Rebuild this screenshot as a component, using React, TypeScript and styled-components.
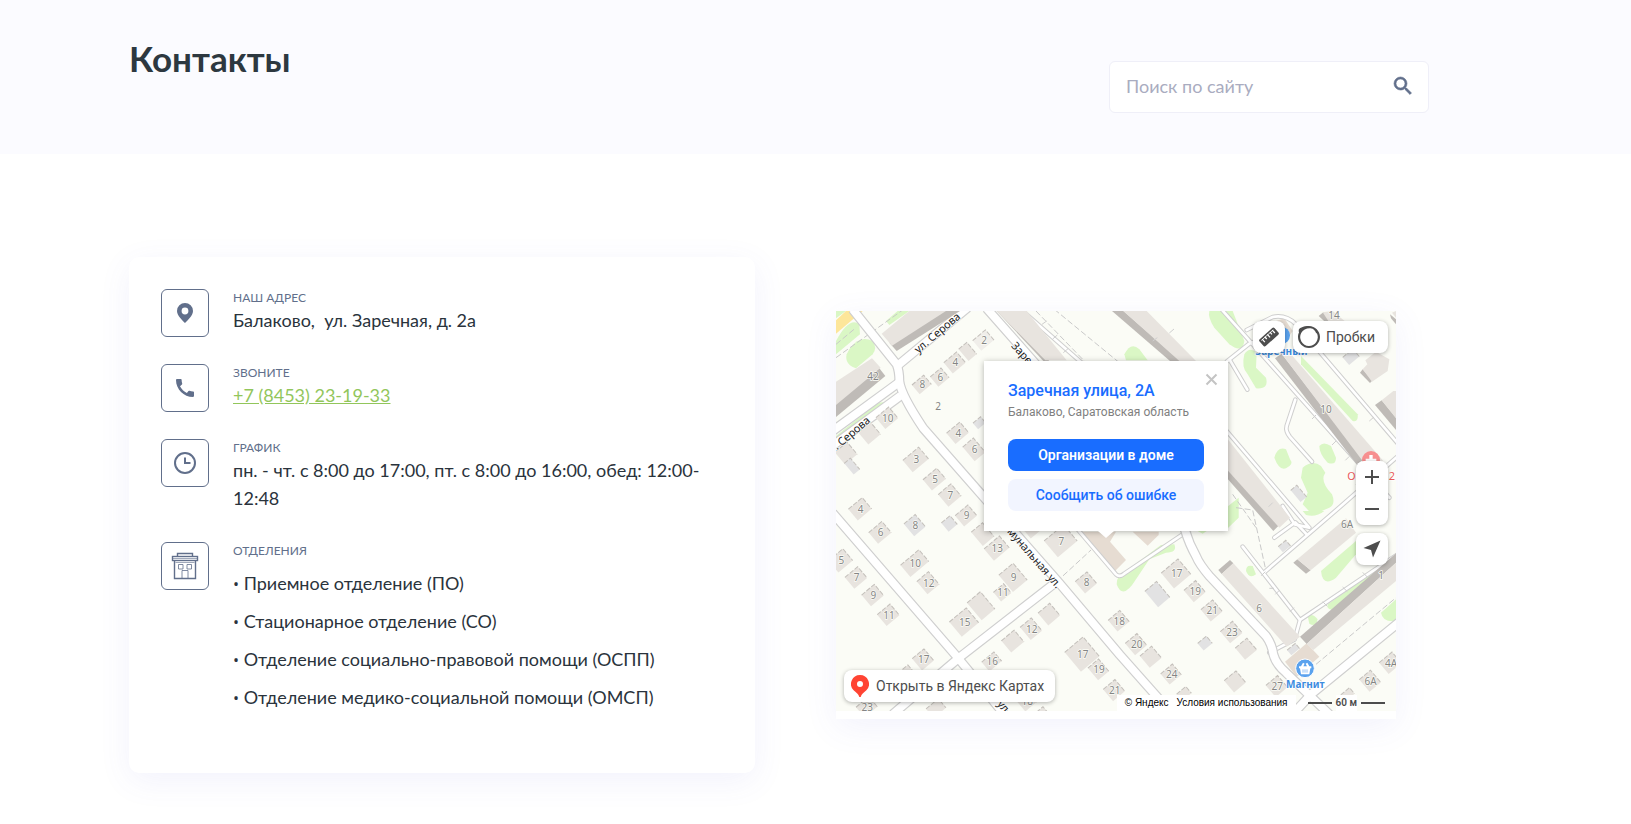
import React from "react";
import styled, { createGlobalStyle } from "styled-components";
import { MdSearch, MdCall } from "react-icons/md";

const slate = "#616f8b";
const ink = "#2a333c";

const GlobalStyle = createGlobalStyle`
  *, *::before, *::after { box-sizing: border-box; }
  body {
    margin: 0;
    background: #fff;
    color: ${ink};
    font-family: Lato, "Open Sans", sans-serif;
    font-size: 18px;
    line-height: 28px;
  }
  h1, h2, p, ul, dl, dd, dt { margin: 0; padding: 0; }
  button, input { font-family: inherit; }
`;

/* ---------- page header ---------- */

const Header = styled.header`
  background: #fbfbff;
`;

const Container = styled.div`
  padding: 0 202px 0 129px;
  @media (max-width: 1100px) {
    padding: 0 24px;
  }
`;

const HeaderRow = styled(Container)`
  display: flex;
  flex-wrap: wrap;
  justify-content: space-between;
  align-items: flex-end;
  padding-top: 36px;
  padding-bottom: 41px;
`;

const Title = styled.h1`
  align-self: flex-start;
  font-size: 35px;
  line-height: 44px;
  font-weight: 700;
  color: #2d3840;
`;

const SearchForm = styled.form`
  display: flex;
  align-items: center;
  width: 320px;
  height: 52px;
  margin-top: 25px;
  padding: 0 13px 2px 16px;
  background: #fff;
  border: 1px solid #efeff8;
  border-radius: 6px;
`;

const SearchInput = styled.input`
  flex: 1;
  min-width: 0;
  padding: 0;
  border: 0;
  outline: 0;
  background: none;
  color: ${ink};
  font-size: 18px;
  line-height: 28px;
  &::placeholder {
    color: #a9acc0;
    opacity: 1;
  }
`;

const SearchButton = styled.button`
  display: flex;
  margin: 0;
  padding: 0;
  border: 0;
  background: none;
  color: ${slate};
  font-size: 24px;
  cursor: pointer;
  path:last-child {
    stroke: currentColor;
    stroke-width: 0.6px;
  }
`;

/* ---------- contact card ---------- */

const Main = styled(Container).attrs({ as: "main" })`
  display: grid;
  grid-template-columns: minmax(0, 626fr) minmax(0, 593fr);
  column-gap: 81px;
  align-items: center;
  padding-top: 103px;
  padding-bottom: 51px;
  @media (max-width: 1100px) {
    grid-template-columns: minmax(0, 1fr);
    row-gap: 40px;
  }
`;

const Card = styled.dl`
  padding: 32px 32px 22px;
  background: #fff;
  border-radius: 10px;
  box-shadow: 0 8px 32px rgba(90, 90, 220, 0.08);
`;

const ContactRow = styled.div`
  display: flex;
  gap: 24px;
  margin-bottom: 27px;
`;

const IconBox = styled.span`
  display: flex;
  flex: none;
  align-items: center;
  justify-content: center;
  width: 48px;
  height: 48px;
  border: 1px solid ${slate};
  border-radius: 6px;
  color: ${slate};
`;

const ContactText = styled.div`
  flex: 1;
  min-width: 0;
  padding-bottom: 3px;
`;

const Label = styled.dt`
  font-size: 12px;
  line-height: 17px;
  color: ${slate};
  text-transform: uppercase;
`;

const Value = styled.dd`
  white-space: pre-wrap;
`;

const PhoneLink = styled.a`
  color: #92c65b;
  text-decoration: underline;
`;

const Departments = styled.ul`
  list-style: none;
  padding-top: 10px;
`;

const Department = styled.li`
  margin-bottom: 10px;
`;

const Bullet = styled.span`
  font-family: "Open Sans", sans-serif;
  font-size: 16px;
  line-height: 16px;
`;

/* ---------- map ---------- */

const MapCard = styled.section`
  margin-right: 33px;
  padding-bottom: 8px;
  background: #fff;
  box-shadow: 0 8px 32px rgba(90, 90, 220, 0.08);
  @media (max-width: 1100px) {
    margin-right: 0;
  }
`;

const MapView = styled.div`
  position: relative;
  height: 400px;
  overflow: hidden;
  background: #fbfcf6;
  color: #4d4d4d;
  font-family: Roboto, "Noto Sans", sans-serif;
  font-size: 14px;
  line-height: 20px;
`;

const MapDrawing = styled.svg`
  display: block;
  width: 100%;
  height: 100%;
`;

const MapButton = styled.button`
  display: flex;
  align-items: center;
  justify-content: center;
  gap: 5px;
  min-width: 32px;
  height: 32px;
  margin: 0;
  padding: 0;
  border: 0;
  border-radius: 8px;
  background: #fff;
  color: #4d4d4d;
  font-size: 14px;
  box-shadow: 0 1px 4px rgba(0, 0, 0, 0.3);
  cursor: pointer;
`;

const TopControls = styled.div`
  position: absolute;
  top: 10px;
  right: 8px;
  display: flex;
  gap: 8px;
`;

const TrafficButton = styled(MapButton)`
  padding: 0 13px 0 4px;
`;

const SideControls = styled.div`
  position: absolute;
  top: 150px;
  right: 8px;
  display: flex;
  flex-direction: column;
  gap: 8px;
`;

const ZoomGroup = styled.div`
  border-radius: 8px;
  background: #fff;
  box-shadow: 0 1px 4px rgba(0, 0, 0, 0.3);
`;

const ZoomButton = styled(MapButton)`
  background: none;
  box-shadow: none;
`;

const OpenButton = styled(MapButton)`
  position: absolute;
  left: 8px;
  bottom: 9px;
  padding: 0 11px 0 7px;
  gap: 7px;
`;

const MapFooter = styled.div`
  position: absolute;
  right: 0;
  bottom: 0;
  display: flex;
  align-items: center;
  gap: 12px;
  height: 16px;
  padding-right: 11px;
  font-size: 10px;
  line-height: 16px;
`;

const Copyrights = styled.div`
  display: flex;
  gap: 8px;
  padding: 0 8px;
  background: #fff;
  font-family: "Liberation Sans", sans-serif;
`;

const FooterLink = styled.a`
  color: #000;
  text-decoration: none;
`;

const Scale = styled.div`
  display: flex;
  align-items: center;
  gap: 4px;
  font-weight: 600;
  &::before,
  &::after {
    content: "";
    width: 24px;
    height: 2px;
    background: #4d4d4d;
    box-shadow: 0 0 2px #fff;
  }
`;

const ScaleText = styled.span`
  background: #fff;
`;

const Balloon = styled.div`
  position: absolute;
  left: 148px;
  top: 50px;
  width: 244px;
  padding: 18px 24px 20px;
  background: #fff;
  box-shadow: 0 1px 6px rgba(0, 0, 0, 0.3);
`;

const BalloonTip = styled.svg`
  position: absolute;
  left: 114px;
  top: 100%;
`;

const CloseButton = styled.button`
  position: absolute;
  top: 10px;
  right: 8px;
  display: flex;
  margin: 0;
  padding: 2px;
  border: 0;
  background: none;
  cursor: pointer;
`;

const BalloonTitle = styled.h2`
  font-size: 16px;
  line-height: 24px;
  font-weight: 500;
`;

const BalloonLink = styled.a`
  color: #196dff;
  text-decoration: none;
`;

const BalloonText = styled.p`
  margin-bottom: 18px;
  font-size: 12px;
  line-height: 18px;
  color: #808080;
  white-space: nowrap;
`;

const BalloonButton = styled.button<{ $primary?: boolean }>`
  display: block;
  width: 100%;
  height: 32px;
  margin: 0;
  padding: 0;
  border: 0;
  border-radius: 8px;
  background: ${(p) => (p.$primary ? "#196dff" : "#f2f5ff")};
  color: ${(p) => (p.$primary ? "#fff" : "#196dff")};
  font-size: 14px;
  font-weight: ${(p) => (p.$primary ? 600 : 500)};
  cursor: pointer;
  & + & {
    margin-top: 8px;
  }
`;

/* Houses on the plan: centre x, centre y, width, height, number, shade */
type HouseData = [number, number, number, number, string?, string?];

const plain = "#e8e4df";
const grey = "#e2e2e3";

const houses: HouseData[] = [
  [442, 88, 50, 40, "2", "#f0eeea"],
  [395, 122, 32, 46], [356, 155, 50, 42, "4"], [311, 199, 42, 38, "6"], [257, 221, 46, 36, "8"],
  [153, 321, 50, 44, "10"], [100, 367, 48, 48], [30, 427, 48, 48], [48, 466, 24, 44, "", grey],
  [365, 366, 52, 42, "4"], [430, 336, 30, 24, "", grey], [414, 416, 42, 56, "6"],
  [239, 446, 62, 46, "3"], [295, 505, 54, 42, "5"], [341, 553, 50, 48, "7"],
  [72, 594, 54, 44, "4"], [390, 614, 50, 42, "9"], [132, 665, 52, 44, "6"], [236, 643, 44, 48, "8", grey],
  [340, 638, 34, 34, "", grey], [440, 670, 44, 54], [482, 712, 60, 46, "13"], [674, 690, 76, 64, "7"],
  [14, 749, 56, 46, "5"], [60, 800, 50, 44, "7"], [110, 853, 50, 44, "9"], [157, 912, 50, 44, "11"],
  [236, 757, 72, 46, "10"], [276, 816, 46, 50, "12"], [531, 800, 56, 66, "9"], [499, 845, 40, 36, "11"],
  [435, 885, 52, 68], [384, 934, 66, 58, "15"], [639, 910, 46, 48], [585, 954, 44, 50, "12"],
  [530, 991, 50, 46], [750, 815, 46, 46, "8"], [261, 1046, 46, 46, "17"], [467, 1052, 48, 36, "16"],
  [210, 1086, 40, 30], [738, 1030, 72, 76, "17"], [787, 1076, 42, 48, "19"], [834, 1138, 46, 46, "21"],
  [92, 1188, 50, 40, "23"], [300, 1192, 48, 36], [572, 1172, 44, 40, "18"], [618, 1204, 26, 22],
  [848, 930, 46, 44, "18"], [900, 1000, 46, 46, "20"], [944, 1038, 46, 46], [1005, 1090, 46, 42, "24"],
  [1020, 788, 66, 60, "17"], [964, 850, 46, 62, "", grey], [1076, 841, 46, 46, "19"], [1127, 899, 46, 46, "21"],
  [1186, 964, 48, 46, "23"], [1107, 997, 34, 28, "", grey], [1230, 1014, 46, 46], [1197, 1112, 46, 46],
  [1322, 1126, 46, 46, "27"], [1044, 1148, 36, 26], [1602, 1110, 44, 48, "6А"], [1663, 1056, 50, 44, "4А"],
  [1535, 1150, 34, 24], [1345, 706, 30, 22, "", grey], [1388, 548, 24, 46, "", grey], [1545, 138, 40, 30, "", grey],
  [1372, 1015, 32, 20, "", grey], [590, 658, 40, 30],
];

const roads = [
  "M50 -5 182 160Q190 180 190 210 194 250 262 352L442 557 662 807 852 1032 1010 1210",
  "M187 162 395 -10",
  "M-10 360 192 212",
  "M-10 404 194 254",
  "M452 -8 600 160 900 500Q1030 620 1047 657 1060 700 1080 735 1090 760 1122 797L1290 975Q1308 1000 1312 1030 1320 1060 1350 1085L1480 1210",
  "M-10 606 367 1042 505 1210",
  "M170 1210 367 1042 662 812",
  "M1370 1210 1425 1150 1700 925",
];

const paths = [
  "M560 0 742 160", "M1152 -10 1660 560", "M1232 57 1310 18Q1350 10 1380 40L1692 405",
  "M1172 152 1240 98 1284 80", "M1182 148 1234 236", "M1378 266 1352 345Q1348 360 1362 378L1428 452",
  "M1172 360 1420 650 1376 640 1340 585", "M1220 707 1392 927 1700 720", "M1287 782 1490 607 1692 430",
  "M1315 680 1378 634 1412 670", "M712 640 840 790Q850 800 865 788L1062 655",
  "M1300 1025 1376 985 1392 927",
];

const lanes = [
  "M0 140 210 -10", "M655 -5 850 155", "M662 812 765 717", "M1200 590 1250 597 1290 780",
  "M1440 1060 1692 850", "M0 100 60 50", "M1190 550 1260 650", "M600 0 745 150", "M1560 520 1600 560",
];

const greens = [
  "M0 90Q40 15 70 40L72 70 0 130Z", "M40 115Q70 70 110 90 125 110 110 130L60 172Q25 160 32 130Z",
  "M150 30 185 0H220L160 42Z", "M0 375 120 280Q150 265 145 285L0 400Z", "M0 0H30L0 22Z",
  "M1120 0H1190L1225 90Q1220 130 1180 100L1135 50Q1115 20 1120 0Z",
  "M865 130Q885 90 910 115L935 148H870Z",
  "M1225 130Q1240 105 1262 125L1260 170 1290 200Q1300 235 1260 232L1235 190Q1215 170 1225 130Z",
  "M1395 135 1565 310Q1568 335 1550 330L1395 160Z",
  "M1315 440Q1325 405 1350 415L1362 445Q1375 460 1350 472 1330 480 1315 440Z",
  "M1450 405Q1462 390 1485 405L1500 440Q1500 465 1475 455 1450 430 1450 405Z",
  "M1400 470Q1430 445 1455 465L1468 485Q1450 510 1488 550 1500 580 1480 590L1430 612 1400 580 1415 545 1395 500Z",
  "M842 820Q840 795 870 780L975 702 1015 700Q1025 725 990 725L940 745 900 805Q860 870 842 820Z",
  "M1230 780Q1230 760 1250 765L1260 790Q1240 805 1230 780Z",
  "M1415 915Q1430 905 1445 925 1440 950 1420 938Z",
  "M1455 780 1560 690V730L1500 800Q1460 830 1455 780Z",
  "M1475 880 1640 765V790L1500 895Q1470 900 1475 880Z",
  "M1635 905 1680 865V930Q1640 935 1635 905Z",
  "M1170 590 1208 560V620L1172 655Z", "M1400 600H1465Q1440 620 1410 612Z", "M1085 660 1120 655 1100 668Z",
];

/* Long blocks of flats: shaded side first, then the roof */
const blocks: [string, string][] = [
  ["M160 95 320 0H372L182 120Z", "M137 68 220 0H330L168 104Z"],
  ["M0 272 130 172 148 195 0 318Z", "M0 212 108 142 134 170 0 282Z"],
  ["M482 0H500L640 150H622Z", "M482 0H572L692 148H628Z"],
  ["M828 0H862L1034 150H1002Z", "M862 0H932L1080 150H1030Z"],
  ["M1172 455 1332 640 1312 660 1172 500Z", "M1172 380 1362 620 1330 650 1172 475Z"],
  ["M1317 142 1337 128 1582 447 1562 460Z", "M1337 128 1352 115 1642 450 1580 450Z"],
  ["M1617 282 1637 268 1680 320V357Z", "M1637 268 1672 240H1680V322Z"],
  ["M1662 10 1680 25V40L1665 22Z", "M1668 5 1680 0V20Z"],
  ["M1372 755 1384 745 1424 778 1410 788Z", "M1384 745 1530 622 1560 665 1424 778Z"],
  ["M1392 977 1680 727V755L1412 999Z", "M1412 999 1680 755V810L1432 1017Z"],
  ["M1147 777 1182 747 1192 757 1157 789Z", "M1157 789 1192 757 1392 977 1352 1007Z"],
  ["M1572 185 1580 175 1610 208 1602 216Z", "M1580 175 1594 160 1588 148 1620 122 1660 145 1655 180 1608 212Z"],
  ["M1448 15 1462 4 1500 35H1470Z", "M1460 4 1490 0 1550 50H1490Z"],
];

function House({ data }: { data: HouseData }) {
  const [cx, cy, w, h, , fill = plain] = data;
  return (
    <g transform={`translate(${cx} ${cy}) rotate(-40)`}>
      <rect x={-w / 2} y={-h / 2} width={w} height={h} fill={fill} />
      <path
        d={`M${-w / 2} ${-h / 2}H${w / 2}V${h / 2}`}
        fill="none"
        stroke="#c4c0bb"
        strokeWidth="3"
        strokeDasharray="14 5"
      />
    </g>
  );
}

function CityPlan() {
  return (
    <MapDrawing viewBox="0 0 1680 1200" preserveAspectRatio="xMidYMid slice" role="img" aria-label="Карта">
      <rect width="1680" height="1200" fill="#fbfcf6" />
      <g fill="#daf7c5">
        {greens.map((d) => <path key={d} d={d} />)}
      </g>
      <path d="M0 28 30 0H80L0 68Z" fill="#fde69a" />
      <g fill="#e6dcd2">
        <path d="M732 662H840L822 692 870 747 832 785Z" />
        <path d="M890 662H968V672L935 704Z" />
        <path d="M1347 1052 1412 997 1450 1037 1382 1097Z" />
        <path d="M1320 30 1345 22 1370 60 1350 90Z" />
      </g>
      <g fill="none" stroke="#c9c9c9" strokeWidth="3" strokeDasharray="18 8">
        {lanes.map((d) => <path key={d} d={d} />)}
      </g>
      <g fill="none" stroke="#cfcfcf" strokeWidth="14" strokeLinejoin="round" strokeLinecap="round">
        {paths.map((d) => <path key={d} d={d} />)}
      </g>
      <g fill="none" stroke="#fff" strokeWidth="8" strokeLinejoin="round" strokeLinecap="round">
        {paths.map((d) => <path key={d} d={d} />)}
      </g>
      <g fill="none" stroke="#cfcfcf" strokeWidth="30" strokeLinejoin="round">
        {roads.map((d) => <path key={d} d={d} />)}
      </g>
      <g fill="none" stroke="#fff" strokeWidth="23" strokeLinejoin="round">
        {roads.map((d) => <path key={d} d={d} />)}
      </g>
      {blocks.map(([side, roof]) => (
        <g key={side}>
          <path d={side} fill="#bfbbb7" />
          <path d={roof} fill={plain} />
        </g>
      ))}
      {houses.map((h) => <House key={`${h[0]}-${h[1]}`} data={h} />)}
      <g fill="none" stroke="#cfcfcf" strokeWidth="3">
        <path d="M1288 782 1276 794M1330 838 1318 850M1374 890 1362 902M1300 832h14M1460 872l14 14M1520 828l14 14M1580 784l14 14M618 40l14 -10M650 84l14 -12M682 125l14 -12M950 90l14-10M1000 66l14-12M1500 390l-12 12M1540 436l-12 12M1440 312l-12 12M1600 330l14-12M1310 575l-12 12" />
      </g>
      <g
        fontFamily='"Noto Sans", sans-serif'
        fontSize="30"
        fill="#858585"
        stroke="#fbfcf6"
        strokeWidth="4"
        paintOrder="stroke"
        textAnchor="middle"
      >
        {houses.filter((h) => h[4]).map((h) => (
          <text key={`${h[0]}-${h[1]}`} x={h[0] + 2} y={h[1] + 11}>{h[4]}</text>
        ))}
        <text x="111" y="208">42</text>
        <text x="306" y="297">2</text>
        <text x="1494" y="24">14</text>
        <text x="1470" y="305">10</text>
        <text x="1533" y="650">6А</text>
        <text x="1635" y="804">1</text>
        <text x="1269" y="904">6</text>
        <g fill="#222" stroke="#fff" fontSize="33" textAnchor="start">
          <text transform="translate(247 128) rotate(-40)">ул. Серова</text>
          <text transform="translate(-12 430) rotate(-40)">л. Серова</text>
          <text transform="translate(524 106) rotate(48)">Заречная ул.</text>
          <text transform="translate(512 662) rotate(49)">мунальная ул.</text>
          <text transform="translate(482 1180) rotate(49)">ул.</text>
        </g>
        <g fill="#3c8ce0" stroke="#fff" fontWeight="700">
          <text x="1336" y="133">Заречный</text>
          <text x="1408" y="1131">Магнит</text>
        </g>
        <g fill="#ea5b5b" stroke="#fff" fontSize="33">
          <text x="1546" y="508">О</text>
          <text x="1668" y="508">2</text>
        </g>
      </g>
      <circle cx="1336" cy="73" r="26" fill="#5aa2ee" />
      <circle cx="1605" cy="447" r="27" fill="#f78f8f" />
      <path d="M1600 432h10v11h11v10h-11v11h-10v-11h-11v-10h11Z" fill="#fff" />
      <circle cx="1407" cy="1072" r="28" fill="#5aa2ee" stroke="#fff" strokeWidth="3" />
      <path
        d="M1389 1066h6l6-11 5 3-4 8h11l-4-8 5-3 6 11h6v6h-3l-3 18h-25l-3-18h-3Z"
        fill="#fff"
      />
      <path d="M1401 1075v10M1407 1075v10M1413 1075v10" stroke="#5aa2ee" strokeWidth="2" />
    </MapDrawing>
  );
}

const PlaceIcon = () => (
  <svg width="16" height="20" viewBox="0 0 16 20" aria-hidden="true">
    <path
      fill={slate}
      fillRule="evenodd"
      d="M8 0a8 8 0 0 1 8 8c0 4.600-5.500 9.500-8 12C5.500 17.500 0 12.600 0 8a8 8 0 0 1 8-8Zm0 4.600a3.400 3.400 0 1 0 0 6.800 3.400 3.400 0 0 0 0-6.800Z"
    />
  </svg>
);

const ClockIcon = () => (
  <svg width="24" height="24" viewBox="0 0 24 24" fill="none" stroke={slate} strokeWidth="2" aria-hidden="true">
    <circle cx="12" cy="12" r="10" />
    <path d="M12 6.500V12h5.500" />
  </svg>
);

function BuildingIcon() {
  return (
    <svg width="28" height="28" viewBox="0 0 28 28" fill="none" stroke={slate} aria-hidden="true">
      <path d="M6.500 4.500V1.500h15v3" strokeWidth="1.400" />
      <rect x="1.500" y="4.500" width="25" height="4" strokeWidth="1.400" />
      <path d="M1.500 6.500h25" strokeWidth=".6" />
      <path d="M3.500 8.500v18h21v-18" strokeWidth="1.400" />
      <path d="M4.500 10.500h19" strokeWidth=".6" />
      <path d="M7.500 12.500h4.500v4.500H7.500zM16 12.500h4.500v4.500H16zM11 26v-7.500h6V26" strokeWidth=".8" />
    </svg>
  );
}

const RulerIcon = () => (
  <svg width="20" height="20" viewBox="0 0 20 20" aria-hidden="true">
    <g transform="rotate(-42 10 10)">
      <rect x="0" y="5.500" width="20" height="9" rx="1.500" fill="#4d4d4d" />
      <path d="M3.500 7v4M7 7v3M10.500 7v4M14 7v3M17 7v4" stroke="#fff" strokeWidth="1.300" />
      <path d="M2 7.500h16" stroke="#fff" strokeWidth=".8" />
    </g>
  </svg>
);

const TrafficIcon = () => (
  <svg width="24" height="24" viewBox="0 0 24 24" aria-hidden="true">
    <path
      fill="#4d4d4d"
      fillRule="evenodd"
      d="M2 7.500C1.200 5 2 3.200 4.500 2.600 6.800 1.400 9 1 12 1c6 0 11 5 11 11s-5 11-11 11S1 18 1 12c0-1.800.3-3.200 1-4.500ZM4.200 8A8.800 8.800 0 1 0 20 8.500C18.500 8 18 3.800 14.500 3.400 10.500 2.800 6 4.200 4.200 8Z"
    />
  </svg>
);

const LocateIcon = () => (
  <svg width="18" height="18" viewBox="0 0 18 18" aria-hidden="true">
    <path d="M17.500.5 10 17.500 8 10 .5 8Z" fill="#4d4d4d" />
  </svg>
);

const PinIcon = () => (
  <svg width="18" height="22" viewBox="0 0 18 22" aria-hidden="true">
    <path
      fill="#ff4433"
      fillRule="evenodd"
      d="M9 0a9 9 0 0 1 6.400 15.300C12.500 18 10.500 19 9.700 22H8.300C7.500 19 5.500 18 2.600 15.300A9 9 0 0 1 9 0Zm0 6a3 3 0 1 0 0 6 3 3 0 0 0 0-6Z"
    />
  </svg>
);

function Contact({ icon, label, children }: { icon: React.ReactNode; label: string; children: React.ReactNode }) {
  return (
    <ContactRow>
      <IconBox>{icon}</IconBox>
      <ContactText>
        <Label>{label}</Label>
        <Value>{children}</Value>
      </ContactText>
    </ContactRow>
  );
}

const departments = [
  "Приемное отделение (ПО)",
  "Стационарное отделение (СО)",
  "Отделение социально-правовой помощи (ОСПП)",
  "Отделение медико-социальной помощи (ОМСП)",
];

export default function App() {
  return (
    <>
      <GlobalStyle />
      <Header>
        <HeaderRow>
          <Title>Контакты</Title>
          <SearchForm role="search" onSubmit={(e) => e.preventDefault()}>
            <SearchInput type="text" placeholder="Поиск по сайту" aria-label="Поиск по сайту" />
            <SearchButton type="submit" aria-label="Найти"><MdSearch /></SearchButton>
          </SearchForm>
        </HeaderRow>
      </Header>
      <Main>
        <Card>
          <Contact icon={<PlaceIcon />} label="Наш адрес">{"Балаково,\u00a0 ул. Заречная, д. 2а"}</Contact>
          <Contact icon={<MdCall size={24} />} label="Звоните">
            <PhoneLink href="tel:+78453231933">+7 (8453) 23-19-33</PhoneLink>
          </Contact>
          <Contact icon={<ClockIcon />} label="График">
            пн. - чт. с 8:00 до 17:00, пт. с 8:00 до 16:00, обед: 12:00-12:48
          </Contact>
          <Contact icon={<BuildingIcon />} label="Отделения">
            <Departments>
              {departments.map((d) => <Department key={d}><Bullet>•</Bullet> {d}</Department>)}
            </Departments>
          </Contact>
        </Card>
        <MapCard>
          <MapView>
            <CityPlan />
            <TopControls>
              <MapButton type="button" aria-label="Линейка"><RulerIcon /></MapButton>
              <TrafficButton type="button"><TrafficIcon />Пробки</TrafficButton>
            </TopControls>
            <SideControls>
              <ZoomGroup>
                <ZoomButton type="button" aria-label="Приблизить">
                  <svg width="14" height="14" viewBox="0 0 14 14" aria-hidden="true">
                    <path d="M6 0h2v6h6v2H8v6H6V8H0V6h6Z" fill="#4d4d4d" />
                  </svg>
                </ZoomButton>
                <ZoomButton type="button" aria-label="Отдалить">
                  <svg width="14" height="14" viewBox="0 0 14 14" aria-hidden="true">
                    <path d="M0 6h14v2H0Z" fill="#4d4d4d" />
                  </svg>
                </ZoomButton>
              </ZoomGroup>
              <MapButton type="button" aria-label="Моё местоположение"><LocateIcon /></MapButton>
            </SideControls>
            <Balloon>
              <CloseButton type="button" aria-label="Закрыть">
                <svg width="13" height="13" viewBox="0 0 13 13" aria-hidden="true">
                  <path d="M1.500 1.500l10 10M11.500 1.500l-10 10" stroke="#c4c4c4" strokeWidth="2" />
                </svg>
              </CloseButton>
              <BalloonTitle><BalloonLink href="#address">Заречная улица, 2А</BalloonLink></BalloonTitle>
              <BalloonText>Балаково, Саратовская область</BalloonText>
              <BalloonButton type="button" $primary>Организации в доме</BalloonButton>
              <BalloonButton type="button">Сообщить об ошибке</BalloonButton>
              <BalloonTip width="16" height="7" viewBox="0 0 16 7" aria-hidden="true">
                <path d="M0 0h16L8 7Z" fill="#fff" />
              </BalloonTip>
            </Balloon>
            <OpenButton type="button"><PinIcon />Открыть в Яндекс Картах</OpenButton>
            <MapFooter>
              <Copyrights>
                <FooterLink href="#yandex">© Яндекс</FooterLink>
                <FooterLink href="#terms">Условия использования</FooterLink>
              </Copyrights>
              <Scale><ScaleText>60 м</ScaleText></Scale>
            </MapFooter>
          </MapView>
        </MapCard>
      </Main>
    </>
  );
}
